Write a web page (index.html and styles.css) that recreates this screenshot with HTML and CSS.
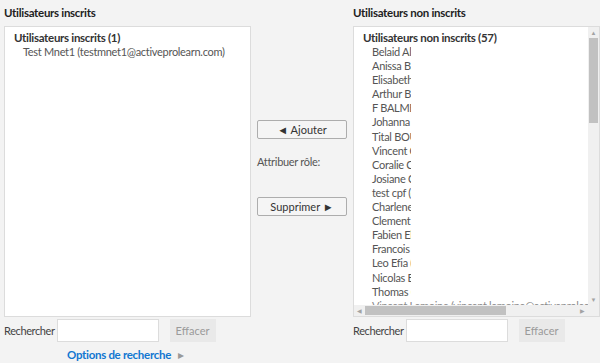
FILE: index.html
```html
<!DOCTYPE html>
<html lang="fr">
<head>
  <meta charset="UTF-8" />
  <title>Inscriptions</title>
  <link rel="stylesheet" href="styles.css">
</head>
<body class="enrol-body">
  <div class="enrol-grid">
    <!-- Colonne gauche -->
    <section class="col">
      <h3 class="col-title">Utilisateurs inscrits</h3>
      <div class="listbox">
        <div class="list-content">
          <div class="group-label">Utilisateurs inscrits (1)</div>
          <div class="item">Test Mnet1 (testmnet1@activeprolearn.com)</div>
        </div>
      </div>
      <div class="search-row">
        <label>Rechercher</label>
        <input type="text" class="search-input">
        <button type="button" class="btn-clear">Effacer</button>
      </div>
      <div class="options-link">Options de recherche <span class="caret">&#9656;</span></div>
    </section>

    <!-- Actions -->
    <section class="middle">
      <button type="button" class="btn-move">&#9668; Ajouter</button>
      <div class="role-label">Attribuer rôle:</div>
      <button type="button" class="btn-move">Supprimer &#9658;</button>
    </section>

    <!-- Colonne droite -->
    <section class="col">
      <h3 class="col-title">Utilisateurs non inscrits</h3>
      <div class="listbox listbox-scroll">
        <div class="list-content">
          <div class="group-label">Utilisateurs non inscrits (57)</div>
          <div class="item clip">Belaid Aliouane</div>
          <div class="item clip">Anissa Bakir</div>
          <div class="item clip">Elisabeth Barre</div>
          <div class="item clip">Arthur Bavay</div>
          <div class="item clip">F BALMES</div>
          <div class="item clip">Johanna Benoit</div>
          <div class="item clip">Tital BOUZID</div>
          <div class="item clip">Vincent Carre</div>
          <div class="item clip">Coralie Chabert</div>
          <div class="item clip">Josiane Colin</div>
          <div class="item clip">test cpf (cpf)</div>
          <div class="item clip">Charlene Dumas</div>
          <div class="item clip">Clement Durand</div>
          <div class="item clip">Fabien Elias</div>
          <div class="item clip">Francois Faure</div>
          <div class="item clip">Leo Efia (leo)</div>
          <div class="item clip">Nicolas Bernard</div>
          <div class="item clip">Thomas Girard</div>
          <div class="item item-last">Vincent Lemoine (vincent.lemoine@activeprolearn.com)</div>
        </div>
        <div class="vbar">
          <span class="arrow">&#9650;</span>
          <div class="vtrack"><div class="vthumb"></div></div>
          <span class="arrow">&#9660;</span>
        </div>
        <div class="hbar">
          <span class="arrow">&#9664;</span>
          <div class="htrack"><div class="hthumb"></div></div>
          <span class="arrow">&#9654;</span>
        </div>
        <div class="corner"></div>
      </div>
      <div class="search-row">
        <label>Rechercher</label>
        <input type="text" class="search-input">
        <button type="button" class="btn-clear">Effacer</button>
      </div>
    </section>
  </div>
</body>
</html>
```

FILE: styles.css
```css
/* ===== Page ===== */
html, body { height: 100%; }
.enrol-body {
  margin: 0;
  background: #f3f3f3;
  font-family: Lato, "Noto Sans", sans-serif;
  font-size: 11px;
  letter-spacing: -0.3px;
  color: #333;
  overflow: hidden;
}

.enrol-grid {
  display: grid;
  grid-template-columns: 247px 90px 247px;
  gap: 0 6px;
  padding: 0 0 0 4px;
}

/* ===== Colonnes ===== */
.col { display: flex; flex-direction: column; }
.col-title {
  margin: 0;
  padding: 6px 0 6px 0;
  font-size: 11.5px;
  font-weight: 700;
  color: #1e1e1e;
  line-height: 14px;
}

.listbox {
  height: 289px;
  background: #fff;
  border: 1px solid #dcdcdc;
  overflow: hidden;
}
.list-content { padding: 4px 0 0 9px; }
.group-label { font-weight: 700; color: #333; line-height: 14px; font-size: 11.5px; }
.item { padding-left: 9px; color: #555; line-height: 14.1px; white-space: nowrap; }
.item.clip { width: 39px; overflow: hidden; }
.item-last { color: #8a8a8a; }

/* listbox avec barres de défilement */
.listbox-scroll {
  display: grid;
  grid-template-columns: 1fr 11px;
  grid-template-rows: 1fr 11px;
}
.listbox-scroll .list-content { overflow: hidden; }
.vbar {
  display: flex; flex-direction: column; align-items: center;
  background: #f0f0f0;
}
.vtrack { flex: 1; width: 100%; padding: 0 1px; box-sizing: border-box; }
.vthumb { height: 85px; background: #c1c1c1; }
.hbar {
  display: flex; align-items: center;
  background: #f0f0f0;
}
.htrack { flex: 1; height: 100%; padding: 1px 0; box-sizing: border-box; }
.hthumb { width: 141px; height: 100%; background: #c1c1c1; }
.arrow { font-size: 6px; color: #a3a3a3; line-height: 11px; width: 11px; text-align: center; letter-spacing: 0; }
.corner { background: #f0f0f0; }

/* ===== Recherche ===== */
.search-row {
  display: flex; align-items: center;
  margin-top: 2px;
}
.search-row label { color: #444; margin-right: 2px; letter-spacing: -0.4px; }
.search-input {
  width: 102px; height: 23px; box-sizing: border-box;
  border: 1px solid #dcdcdc; background: #fff; margin: 0; padding: 0;
}
.btn-clear {
  margin-left: 11px;
  width: 46px; height: 23px;
  border: none; background: #e9e9e9; color: #9a9a9a;
  font-family: inherit; font-size: 11px; padding: 0;
}

.options-link {
  margin: 6px 0 0 63px;
  color: #1177d1;
  font-weight: 700;
  font-size: 11.5px;
  line-height: 14px;
}
.options-link .caret { color: #999; font-weight: 400; margin-left: 5px; }

/* ===== Milieu ===== */
.middle {
  display: flex; flex-direction: column; align-items: flex-start;
  padding-top: 120px;
}
.btn-move {
  width: 90px; height: 19px; box-sizing: border-box;
  background: #f5f5f5; border: 1px solid #adadad; border-radius: 2px;
  font-family: inherit; font-size: 11px; color: #333; padding: 0;
}
.role-label { margin: 16px 0 28px; color: #555; line-height: 14px; }
```
